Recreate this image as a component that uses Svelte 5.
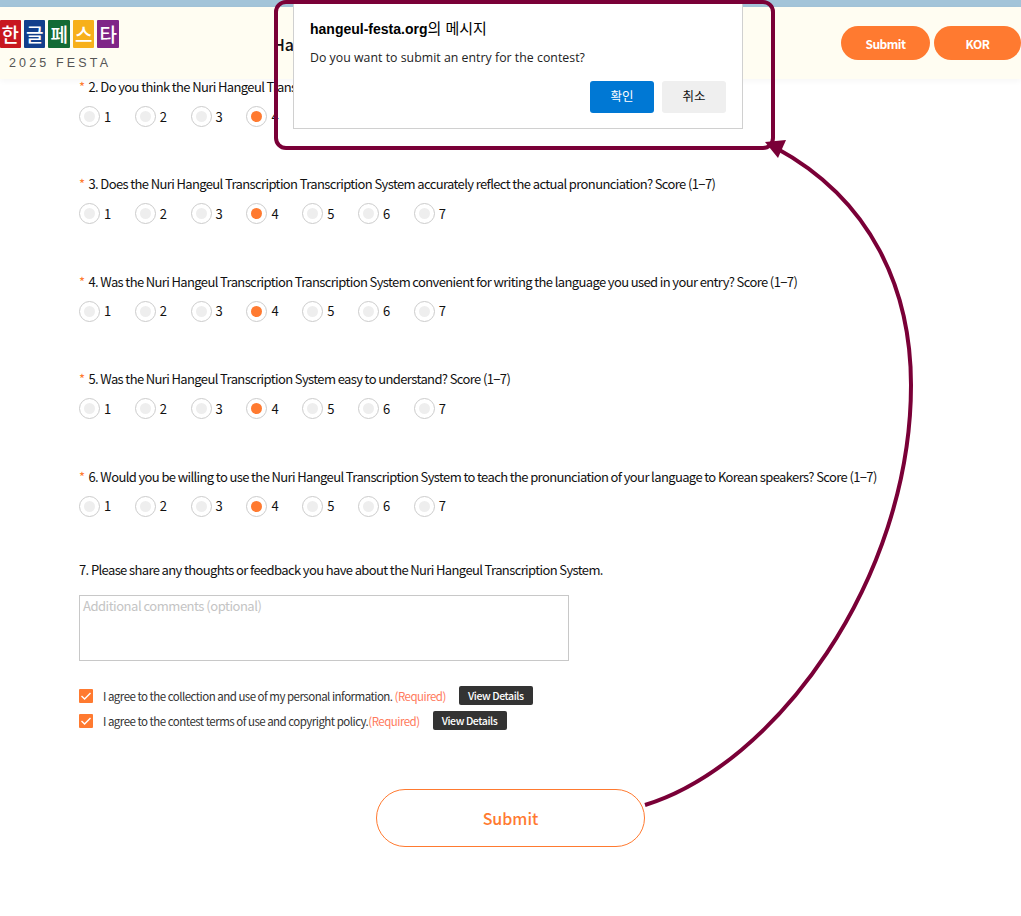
<script>
  const tiles = [
    { t: '한', c: '#c8171f' },
    { t: '글', c: '#123f8c' },
    { t: '페', c: '#136b35' },
    { t: '스', c: '#f7b01b' },
    { t: '타', c: '#7f2587' }
  ];
  const questions = [
    '2. Do you think the Nuri Hangeul Transcription System is appropriate for your language? Score (1−7)',
    '3. Does the Nuri Hangeul Transcription Transcription System accurately reflect the actual pronunciation? Score (1−7)',
    '4. Was the Nuri Hangeul Transcription Transcription System convenient for writing the language you used in your entry? Score (1−7)',
    '5. Was the Nuri Hangeul Transcription System easy to understand? Score (1−7)',
    '6. Would you be willing to use the Nuri Hangeul Transcription System to teach the pronunciation of your language to Korean speakers? Score (1−7)'
  ];
  const scores = [1, 2, 3, 4, 5, 6, 7];
  const agreements = [
    'I agree to the collection and use of my personal information. ',
    'I agree to the contest terms of use and copyright policy.'
  ];
</script>

<div class="page">
  <div class="strip"></div>
  <header class="header">
    <div class="logo">
      <div class="tiles">
        {#each tiles as tile}
          <span class="tile" style:background={tile.c}>{tile.t}</span>
        {/each}
      </div>
      <div class="year">2025 FESTA</div>
    </div>
    <div class="title">Hangeul Festa</div>
    <div class="actions">
      <button class="pill pill-submit">Submit</button>
      <button class="pill pill-lang">KOR</button>
    </div>
  </header>

  <main class="form">
    {#each questions as q}
      <section class="question">
        <div class="label"><span class="star">*</span>{q}</div>
        <div class="scale">
          {#each scores as s}
            <label class="option">
              <span class="radio" class:on={s === 4}><span class="dot"></span></span>
              <span class="num">{s}</span>
            </label>
          {/each}
        </div>
      </section>
    {/each}

    <div class="label free">7. Please share any thoughts or feedback you have about the Nuri Hangeul Transcription System.</div>
    <div class="textarea">Additional comments (optional)</div>

    <div class="agrees">
      {#each agreements as a}
        <div class="agree">
          <span class="check">
            <svg width="12" height="10" viewBox="0 0 12 10"><path d="M1.5 5 L4.6 8 L10.5 2" fill="none" stroke="#fff" stroke-width="1.4" /></svg>
          </span>
          <span class="agree-text">{a}<span class="req">(Required)</span></span>
          <button class="details">View Details</button>
        </div>
      {/each}
    </div>

    <div class="submit-wrap"><button class="submit">Submit</button></div>
  </main>

  <div class="dialog">
    <div class="dialog-title"><b>hangeul-festa.org</b><span class="dialog-ko">의 메시지</span></div>
    <div class="dialog-msg">Do you want to submit an entry for the contest?</div>
    <div class="dialog-actions">
      <button class="ok">확인</button>
      <button class="cancel">취소</button>
    </div>
  </div>

  <svg class="annot" width="1021" height="916" viewBox="0 0 1021 916">
    <rect x="276" y="2" width="497" height="146" rx="10" fill="none" stroke="#7a0037" stroke-width="4" />
    <path d="M645 805 C775 765 911 580 911 385 C911 290 872 200 776 148" fill="none" stroke="#7a0037" stroke-width="4" />
    <path d="M765 142 L786 140 L778 158 Z" fill="#7a0037" />
  </svg>
</div>

<style>
  :global(body) {
    margin: 0;
    background: #fff;
    overflow: hidden;
  }
  .page {
    position: relative;
    width: 1021px;
    height: 916px;
    overflow: hidden;
    font-family: "Noto Sans CJK KR", "Noto Sans", sans-serif;
    color: #111;
  }
  button {
    font-family: inherit;
    border: none;
    padding: 0;
  }
  .strip {
    height: 7px;
    background: #a3c4d9;
  }
  .header {
    height: 72px;
    background: #fffdf2;
    box-shadow: 0 2px 6px rgba(0, 0, 0, 0.04);
    display: flex;
    align-items: flex-start;
  }
  .logo {
    width: 270.5px;
    margin-left: -0.5px;
    padding-top: 13px;
    box-sizing: border-box;
  }
  .tiles {
    display: flex;
    gap: 3.1px;
  }
  .tile {
    width: 21.4px;
    height: 28px;
    border-radius: 1px;
    color: #fff;
    font-size: 19px;
    font-weight: 500;
    line-height: 28px;
    text-align: center;
  }
  .year {
    margin: 7px 0 0 9.5px;
    font-family: "Liberation Sans", sans-serif;
    font-size: 12.5px;
    line-height: 16px;
    letter-spacing: 3.15px;
    color: #555;
  }
  .title {
    margin: 26px 0 0 3px;
    font-size: 16px;
    font-weight: 500;
    line-height: 22px;
  }
  .actions {
    margin: 19px 0 0 auto;
    display: flex;
    gap: 4px;
  }
  .pill {
    height: 34px;
    border-radius: 17px;
    background: #ff7a30;
    color: #fff;
    font-size: 12px;
    font-weight: 700;
    letter-spacing: -0.5px;
  }
  .pill-submit {
    width: 89px;
  }
  .pill-lang {
    width: 87px;
  }
  .form {
    margin-top: -1px;
    padding-left: 79px;
  }
  .question {
    height: 97.4px;
  }
  .label {
    font-size: 13px;
    font-weight: 400;
    line-height: 18px;
    letter-spacing: -0.62px;
    white-space: nowrap;
    color: #111;
  }
  .star {
    color: #ff7a30;
    margin-right: 4px;
  }
  .scale {
    display: flex;
    margin-top: 10px;
  }
  .option {
    width: 55.8px;
    display: flex;
    align-items: center;
    gap: 4px;
  }
  .radio {
    width: 19px;
    height: 19px;
    border: 1px solid #ccc;
    border-radius: 50%;
    display: flex;
    align-items: center;
    justify-content: center;
  }
  .dot {
    width: 11px;
    height: 11px;
    border-radius: 50%;
    background: #eee;
  }
  .radio.on .dot {
    background: #ff7a30;
  }
  .num {
    font-size: 13px;
    line-height: 18px;
  }
  .free {
    margin-top: -4px;
  }
  .textarea {
    width: 490px;
    height: 66px;
    box-sizing: border-box;
    margin-top: 16px;
    border: 1px solid #c8c8c8;
    padding: 0 3px;
    font-size: 13px;
    line-height: 19px;
    letter-spacing: -0.48px;
    color: #c4c4c4;
  }
  .agrees {
    margin-top: 25px;
    display: flex;
    flex-direction: column;
    gap: 5px;
  }
  .agree {
    height: 20px;
    display: flex;
    align-items: center;
  }
  .check {
    width: 14px;
    height: 14px;
    border-radius: 1px;
    background: #ff7a30;
    display: flex;
    align-items: center;
    justify-content: center;
  }
  .agree-text {
    margin-left: 10px;
    font-size: 11.5px;
    letter-spacing: -0.52px;
    color: #333;
    white-space: pre;
  }
  .req {
    color: #ff7a5c;
  }
  .details {
    margin-left: 13px;
    width: 74px;
    height: 19px;
    border-radius: 2px;
    background: #333;
    color: #fff;
    font-size: 10.5px;
    font-weight: 500;
    letter-spacing: -0.4px;
  }
  .submit-wrap {
    margin-top: 58px;
    padding-left: 297px;
  }
  .submit {
    width: 269px;
    height: 58px;
    box-sizing: border-box;
    border: 1px solid #ff7a30;
    border-radius: 29px;
    background: #fff;
    color: #ff7a30;
    font-size: 16px;
    font-weight: 500;
  }
  .dialog {
    position: absolute;
    left: 293px;
    top: -1px;
    width: 450px;
    height: 130px;
    box-sizing: border-box;
    background: #fff;
    border: 1px solid #d0d0d0;
    padding: 19px 16px 0;
  }
  .dialog-title {
    font-family: "Liberation Sans", "Noto Sans CJK KR", sans-serif;
    font-size: 14px;
    line-height: 20px;
    color: #000;
  }
  .dialog-ko {
    font-size: 15px;
  }
  .dialog-msg {
    margin-top: 10px;
    font-family: "Open Sans", sans-serif;
    font-size: 12.3px;
    line-height: 18px;
    letter-spacing: 0.03px;
    color: #222;
  }
  .dialog-actions {
    margin-top: 14px;
    display: flex;
    justify-content: flex-end;
    gap: 8px;
  }
  .ok,
  .cancel {
    width: 64px;
    height: 32px;
    border-radius: 3px;
    font-size: 12.5px;
    line-height: 28px;
    padding-bottom: 2px;
  }
  .ok {
    background: #0078d4;
    color: #fff;
  }
  .cancel {
    background: #efefef;
    color: #111;
  }
  .annot {
    position: absolute;
    left: 0;
    top: 0;
    pointer-events: none;
  }
</style>
